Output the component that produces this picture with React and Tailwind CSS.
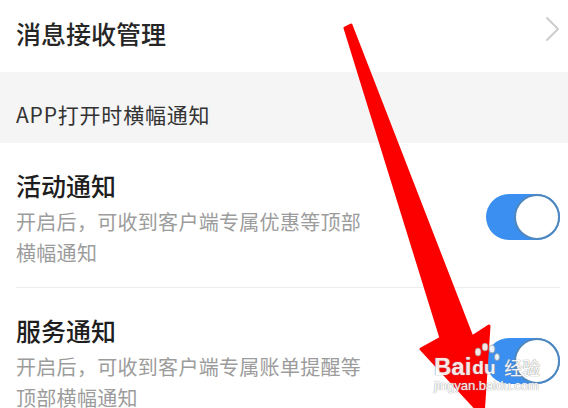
import React from "react";

const font = "font-['Noto_Sans_CJK_SC','Noto_Sans',sans-serif]";

function Toggle({ className = "" }) {
  return (
    <div
      className={`relative w-[74px] h-[46px] rounded-full bg-[#3a8ff0] shrink-0 ${className}`}
    >
      <div className="absolute right-0 top-0 w-[46px] h-[46px] rounded-full bg-white border-[2px] border-[#4f87bf]" />
    </div>
  );
}

function Row({ title, lines, toggleTop }) {
  return (
    <div className="flex items-start justify-between">
      <div className="flex flex-col">
        <div className="text-[25px] leading-[30px] font-medium text-[#1e1e1e]">
          {title}
        </div>
        <div className="mt-[6px] text-[20px] tracking-[0.3px] leading-[31px] text-[#9c9c9c]">
          {lines.map((l) => (
            <div key={l}>{l}</div>
          ))}
        </div>
      </div>
      <Toggle className={toggleTop} />
    </div>
  );
}

export default function App() {
  return (
    <div className={`relative w-[568px] h-[408px] overflow-hidden bg-white ${font}`}>
      {/* header row */}
      <div className="h-[72px] flex items-start justify-between pl-4 pr-[6px] pt-[18px]">
        <div className="text-[25px] leading-[30px] font-medium text-[#262626]">
          消息接收管理
        </div>
        <svg width="18" height="26" viewBox="0 0 18 26" className="mt-[-2px]">
          <path
            d="M3 2 L14 13 L3 24"
            fill="none"
            stroke="#cdcdcd"
            strokeWidth="2"
            strokeLinecap="round"
            strokeLinejoin="round"
          />
        </svg>
      </div>

      {/* section header */}
      <div className="h-[71px] bg-[#f5f5f5] pl-4 pt-[30px]">
        <div className="text-[21px] tracking-[0.8px] leading-[25px] text-[#333333]">
          APP打开时横幅通知
        </div>
      </div>

      {/* rows */}
      <div className="pl-4 pr-[8px]">
        <div className="pt-[27px] pb-[19px] border-b border-[#ededed]">
          <Row
            title="活动通知"
            lines={["开启后，可收到客户端专属优惠等顶部", "横幅通知"]}
            toggleTop="mt-[24px]"
          />
        </div>
        <div className="pt-[27px]">
          <Row
            title="服务通知"
            lines={["开启后，可收到客户端专属账单提醒等", "顶部横幅通知"]}
            toggleTop="mt-[23px]"
          />
        </div>
      </div>

      {/* red arrow */}
      <svg
        className="absolute inset-0 pointer-events-none"
        width="568"
        height="408"
        viewBox="0 0 568 408"
      >
        <polygon
          points="345,28 351,25 472,337 489,326 483,416 421,349 441,338"
          fill="#fc0000"
          stroke="#fc0000"
          strokeWidth="3"
          strokeLinejoin="round"
        />
      </svg>

      {/* watermark */}
      <div className="absolute left-[434px] top-[343px] pointer-events-none flex flex-col items-start opacity-90">
        <div className="flex items-end">
          <span className="font-['Liberation_Sans',sans-serif] font-bold text-[24px] leading-[25px] text-white [text-shadow:0_0_1px_#8a8a8a,0_0_1px_#8a8a8a]">
            Bai
          </span>
          <div className="relative w-[30px] h-[36px]">
            <svg width="30" height="22" viewBox="0 0 30 22" className="absolute left-0 top-0">
              <ellipse cx="7" cy="9" rx="3" ry="4" fill="white" stroke="#9a9a9a" strokeWidth="0.8" />
              <ellipse cx="14" cy="4" rx="3" ry="4" fill="white" stroke="#9a9a9a" strokeWidth="0.8" />
              <ellipse cx="21" cy="6" rx="3" ry="4" fill="white" stroke="#9a9a9a" strokeWidth="0.8" />
              <ellipse cx="26" cy="14" rx="2.5" ry="3.5" fill="white" stroke="#9a9a9a" strokeWidth="0.8" />
            </svg>
            <span className="absolute left-[1px] bottom-[1px] font-['Liberation_Sans',sans-serif] font-bold text-[19px] leading-[21px] text-white [text-shadow:0_0_1px_#8a8a8a,0_0_1px_#8a8a8a]">
              du
            </span>
          </div>
          <span className="ml-[3px] text-[18px] leading-[23px] text-white [text-shadow:0_0_1px_#8a8a8a,0_0_1px_#8a8a8a]">
            经验
          </span>
        </div>
        <span className="font-['Liberation_Sans',sans-serif] text-[13px] leading-[14px] text-white [text-shadow:0_0_1px_#9a9a9a,0_0_1px_#9a9a9a]">
          jingyan.baidu.com
        </span>
      </div>
    </div>
  );
}
